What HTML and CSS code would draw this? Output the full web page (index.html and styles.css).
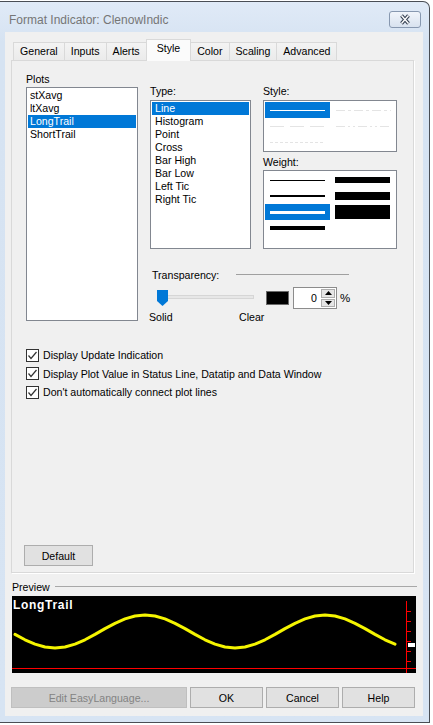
FILE: index.html
```html
<!DOCTYPE html>
<html lang="en">
<head>
  <meta charset="UTF-8">
  <title>Format Indicator: ClenowIndic</title>
  <link rel="stylesheet" href="styles.css">
</head>
<body>
  <div class="window">
    <!-- title bar -->
    <div class="titlebar">
      <span class="title">Format Indicator: ClenowIndic</span>
      <div class="close-btn">
        <svg width="14" height="11" viewBox="0 0 14 11">
          <path d="M3.5 1.5 L10.5 9.5 M10.5 1.5 L3.5 9.5" stroke="#3a4556" stroke-width="3.6" fill="none"/>
          <path d="M3.5 1.5 L10.5 9.5 M10.5 1.5 L3.5 9.5" stroke="#fff" stroke-width="1.4" fill="none"/>
        </svg>
      </div>
    </div>

    <div class="client">
      <!-- tabs -->
      <div class="tabs">
        <div class="tab">General</div>
        <div class="tab">Inputs</div>
        <div class="tab">Alerts</div>
        <div class="tab active">Style</div>
        <div class="tab">Color</div>
        <div class="tab">Scaling</div>
        <div class="tab">Advanced</div>
      </div>

      <div class="panel">
        <div class="main">
          <div class="plots">
            <div class="label">Plots</div>
            <div class="listbox plots-list">
              <div class="item">stXavg</div>
              <div class="item">ltXavg</div>
              <div class="item selected">LongTrail</div>
              <div class="item">ShortTrail</div>
            </div>
          </div>

          <div class="settings">
            <div class="top-row">
              <div class="type-col">
                <div class="label">Type:</div>
                <div class="listbox type-list">
                  <div class="item selected">Line</div>
                  <div class="item">Histogram</div>
                  <div class="item">Point</div>
                  <div class="item">Cross</div>
                  <div class="item">Bar High</div>
                  <div class="item">Bar Low</div>
                  <div class="item">Left Tic</div>
                  <div class="item">Right Tic</div>
                </div>
              </div>

              <div class="style-col">
                <div class="label">Style:</div>
                <div class="picker style-box">
                  <svg width="132" height="50" viewBox="0 0 132 50">
                    <rect x="1" y="1" width="65" height="16" fill="#0078d7"/>
                    <line x1="6" y1="9.5" x2="61" y2="9.5" stroke="#fff" stroke-width="1"/>
                    <line x1="72" y1="9.5" x2="127" y2="9.5" stroke="#e4e4e4" stroke-width="1" stroke-dasharray="9 3 3 3"/>
                    <line x1="6" y1="25.5" x2="61" y2="25.5" stroke="#e4e4e4" stroke-width="1" stroke-dasharray="14 6"/>
                    <line x1="72" y1="25.5" x2="127" y2="25.5" stroke="#e4e4e4" stroke-width="1" stroke-dasharray="9 3 2 3 2 3"/>
                    <line x1="6" y1="41.5" x2="61" y2="41.5" stroke="#e4e4e4" stroke-width="1" stroke-dasharray="3 2"/>
                  </svg>
                </div>
                <div class="label weight-label">Weight:</div>
                <div class="picker weight-box">
                  <svg width="132" height="77" viewBox="0 0 132 77">
                    <line x1="6" y1="9.5" x2="61" y2="9.5" stroke="#000" stroke-width="1"/>
                    <line x1="6" y1="25" x2="61" y2="25" stroke="#000" stroke-width="2"/>
                    <rect x="1" y="33" width="65" height="16" fill="#0078d7"/>
                    <line x1="6" y1="41.5" x2="61" y2="41.5" stroke="#fff" stroke-width="3"/>
                    <line x1="6" y1="57" x2="61" y2="57" stroke="#000" stroke-width="4"/>
                    <rect x="71" y="6" width="55" height="6" fill="#000"/>
                    <rect x="71" y="21" width="55" height="8" fill="#000"/>
                    <rect x="71" y="34" width="55" height="14" fill="#000"/>
                  </svg>
                </div>
              </div>
            </div>

            <div class="trans-head">
              <span>Transparency:</span>
              <span class="rule"></span>
            </div>
            <div class="trans-row">
              <div class="slider">
                <div class="track"></div>
                <svg class="thumb" width="11" height="16" viewBox="0 0 11 16">
                  <polygon points="0,0 11,0 11,11 5.5,16 0,11" fill="#0078d7"/>
                </svg>
              </div>
              <div class="swatch"></div>
              <div class="spin">
                <span class="spin-value">0</span>
                <div class="spin-btns">
                  <div class="spin-btn">
                    <svg width="7" height="4" viewBox="0 0 7 4"><polygon points="0,4 7,4 3.5,0" fill="#000"/></svg>
                  </div>
                  <div class="spin-btn">
                    <svg width="7" height="4" viewBox="0 0 7 4"><polygon points="0,0 7,0 3.5,4" fill="#000"/></svg>
                  </div>
                </div>
              </div>
              <span class="pct">%</span>
            </div>
            <div class="trans-labels">
              <span class="solid">Solid</span>
              <span>Clear</span>
            </div>
          </div>
        </div>

        <!-- check options -->
        <div class="checks">
          <label class="check">
            <span class="box"><svg width="11" height="11" viewBox="0 0 11 11"><polyline points="1.5,5.5 4,8.5 9.5,2" fill="none" stroke="#333" stroke-width="1.2"/></svg></span>
            Display Update Indication
          </label>
          <label class="check">
            <span class="box"><svg width="11" height="11" viewBox="0 0 11 11"><polyline points="1.5,5.5 4,8.5 9.5,2" fill="none" stroke="#333" stroke-width="1.2"/></svg></span>
            Display Plot Value in Status Line, Datatip and Data Window
          </label>
          <label class="check">
            <span class="box"><svg width="11" height="11" viewBox="0 0 11 11"><polyline points="1.5,5.5 4,8.5 9.5,2" fill="none" stroke="#333" stroke-width="1.2"/></svg></span>
            Don't automatically connect plot lines
          </label>
        </div>

        <button class="btn default-btn">Default</button>
      </div>

      <!-- preview -->
      <div class="preview-head">
        <span>Preview</span>
        <span class="rule"></span>
      </div>
      <div class="preview">
        <span class="preview-name">LongTrail</span>
        <svg width="404" height="77" viewBox="0 0 404 77">
          <polyline fill="none" stroke="#f5f500" stroke-width="3" stroke-linejoin="round" stroke-linecap="round"
            points="3,38.4 13,43.8 23,48.1 33,51 43,52 53,51 63,48.1 73,43.8 83,38.4 93,32.6 103,27.3 113,22.9 123,20 133,19 143,20 153,22.9 163,27.3 173,32.6 183,38.4 193,43.8 203,48.1 213,51 223,52 233,51 243,48.1 253,43.8 263,38.4 273,32.6 283,27.3 293,22.9 303,20 313,19 323,20 333,22.9 343,27.3 353,32.6 363,38.4 373,43.8 383,48.1"/>
          <line x1="394.5" y1="5" x2="394.5" y2="77" stroke="#f00" stroke-width="1"/>
          <line x1="0" y1="72.5" x2="404" y2="72.5" stroke="#f00" stroke-width="1"/>
          <path d="M394 15.5 H399 M394 25.5 H399 M394 35.5 H399 M394 45.5 H399 M394 55.5 H399 M394 65.5 H399" stroke="#f00" stroke-width="1"/>
          <rect x="396" y="47" width="7" height="4" fill="#fff"/>
        </svg>
      </div>

      <!-- bottom buttons -->
      <div class="buttons">
        <button class="btn edit-btn" disabled>Edit EasyLanguage...</button>
        <button class="btn">OK</button>
        <button class="btn">Cancel</button>
        <button class="btn">Help</button>
      </div>
    </div>
  </div>
</body>
</html>
```

FILE: styles.css
```css
* {
  box-sizing: border-box;
}

body {
  margin: 0;
  background-color: #ffffff;
  font-family: 'Liberation Sans', Arial, sans-serif;
  font-size: 10.6px;
  color: #000;
}

.window {
  width: 430px;
  height: 722px;
  margin-top: 1px;
  border: 1px solid #4a4e55;
  border-left: none;
  border-top-right-radius: 7px;
  background: linear-gradient(#e0eaf7, #d6e3f2 40px, #d7e4f3);
  display: flex;
  flex-direction: column;
}

/* ========== title bar ========== */
.titlebar {
  height: 30px;
  display: flex;
  align-items: center;
  padding: 5px 8px 0 9px;
}

.title {
  flex: 1;
  font-size: 12px;
  color: #767676;
}

.close-btn {
  width: 32px;
  height: 17px;
  border: 1px solid #8798b0;
  border-radius: 3px;
  background: linear-gradient(#f1f5fb, #d8e2ef);
  display: flex;
  align-items: center;
  justify-content: center;
}

/* ========== client area ========== */
.client {
  margin-left: 5px;
  width: 418px;
  height: 684px;
  background-color: #f0f0f0;
  padding-top: 7px;
  display: flex;
  flex-direction: column;
}

.tabs {
  display: flex;
  align-items: flex-end;
  height: 21px;
  margin-left: 8px;
  position: relative;
  z-index: 1;
}

.tab {
  height: 18px;
  line-height: 17px;
  padding: 0 6px;
  border: 1px solid #d9d9d9;
  border-bottom: none;
  margin-left: -1px;
  background: linear-gradient(#f3f3f3, #ebebeb);
}

.tab:first-child {
  margin-left: 0;
}

.tab.active {
  height: 22px;
  line-height: 16px;
  margin-bottom: -1px;
  padding: 0 10px;
  background: #fbfbfb;
}

.panel {
  margin-left: 6px;
  width: 403px;
  height: 513px;
  border: 1px solid #d9d9d9;
  box-shadow: 1px 1px 0 #ffffff;
  background-color: #f0f0f0;
  padding: 12px 0 6px 14px;
  display: flex;
  flex-direction: column;
}

.main {
  display: flex;
}

.label {
  height: 13px;
  line-height: 13px;
}

.listbox {
  border: 1px solid #828790;
  background-color: #fff;
  padding: 1px;
}

.item {
  height: 13px;
  line-height: 13px;
  padding-left: 2px;
  white-space: nowrap;
}

.item.selected {
  background-color: #0078d7;
  color: #fff;
}

.plots {
  width: 112px;
}

.plots .label {
  margin-bottom: 1px;
}

.plots-list {
  height: 234px;
}

.settings {
  margin-left: 12px;
  padding-top: 12px;
}

.top-row {
  display: flex;
}

.type-col {
  width: 101px;
}

.type-list {
  margin-top: 2px;
  height: 149px;
}

.type-list .item {
  padding-left: 3px;
}

.style-col {
  margin-left: 12px;
  width: 134px;
}

.picker {
  margin-top: 2px;
  border: 1px solid #828790;
  background-color: #fff;
}

.picker svg {
  display: block;
}

.style-box {
  height: 52px;
}

.weight-label {
  margin-top: 4px;
}

.weight-box {
  margin-top: 1px;
  height: 79px;
}

/* transparency */
.trans-head {
  display: flex;
  align-items: center;
  width: 199px;
  height: 13px;
  margin-top: 19px;
  padding-left: 2px;
}

.rule {
  height: 1px;
  background-color: #a0a0a0;
}

.trans-head .rule {
  margin-left: auto;
  width: 113px;
}

.trans-row {
  display: flex;
  align-items: center;
  height: 22px;
  margin-top: 6px;
}

.slider {
  position: relative;
  width: 97px;
  height: 16px;
  margin-left: 7px;
}

.track {
  margin-top: 5px;
  height: 4px;
  background-color: #e7e7e7;
  border: 1px solid #d6d6d6;
}

.thumb {
  position: absolute;
  left: 0;
  top: 0;
}

.swatch {
  width: 23px;
  height: 14px;
  margin-left: 12px;
  background-color: #000;
  border: 1px solid #6a6a6a;
}

.spin {
  display: flex;
  width: 44px;
  height: 22px;
  margin-left: 4px;
  border: 1px solid #8c8c8c;
  background-color: #fff;
}

.spin-value {
  flex: 1;
  text-align: right;
  line-height: 20px;
  padding-right: 4px;
}

.spin-btns {
  width: 15px;
  padding: 1px 1px 1px 0;
  display: flex;
  flex-direction: column;
  gap: 1px;
}

.spin-btn {
  flex: 1;
  border: 1px solid #adadad;
  background-color: #e5e5e5;
  display: flex;
  align-items: center;
  justify-content: center;
}

.pct {
  margin-left: 3px;
  font-size: 11.5px;
}

.trans-labels {
  display: flex;
  height: 13px;
  line-height: 13px;
  margin-top: 2px;
}

.trans-labels .solid {
  width: 90px;
  margin-left: -1px;
}

/* check options */
.checks {
  margin-top: 22px;
}

.check {
  display: flex;
  align-items: center;
  height: 18.5px;
}

.box {
  width: 13px;
  height: 13px;
  border: 1px solid #333;
  background-color: #fff;
  margin-right: 4px;
  display: flex;
  align-items: center;
  justify-content: center;
}

/* buttons */
.btn {
  height: 21px;
  width: 73px;
  padding: 0;
  border: 1px solid #adadad;
  background-color: #e1e1e1;
  font-family: inherit;
  font-size: 10.6px;
  color: #000;
}

.default-btn {
  margin-top: auto;
  margin-left: -2px;
  width: 69px;
}

.edit-btn {
  width: 176px;
  background-color: #cccccc;
  border-color: #bfbfbf;
  color: #838383;
}

/* ========== preview ========== */
.preview-head {
  display: flex;
  align-items: center;
  width: 405px;
  height: 13px;
  margin: 7px 0 0 7px;
}

.preview-head .rule {
  flex: 1;
  margin-left: 5px;
  background-color: #a8a8a8;
}

.preview {
  position: relative;
  width: 404px;
  height: 77px;
  margin: 3px 0 0 7px;
  background-color: #000;
}

.preview svg {
  display: block;
}

.preview-name {
  position: absolute;
  left: 1px;
  top: 2px;
  color: #fff;
  font-weight: bold;
  font-size: 12px;
  letter-spacing: 0.7px;
}

.buttons {
  display: flex;
  gap: 3px;
  margin: 14px 0 0 6px;
}
```
